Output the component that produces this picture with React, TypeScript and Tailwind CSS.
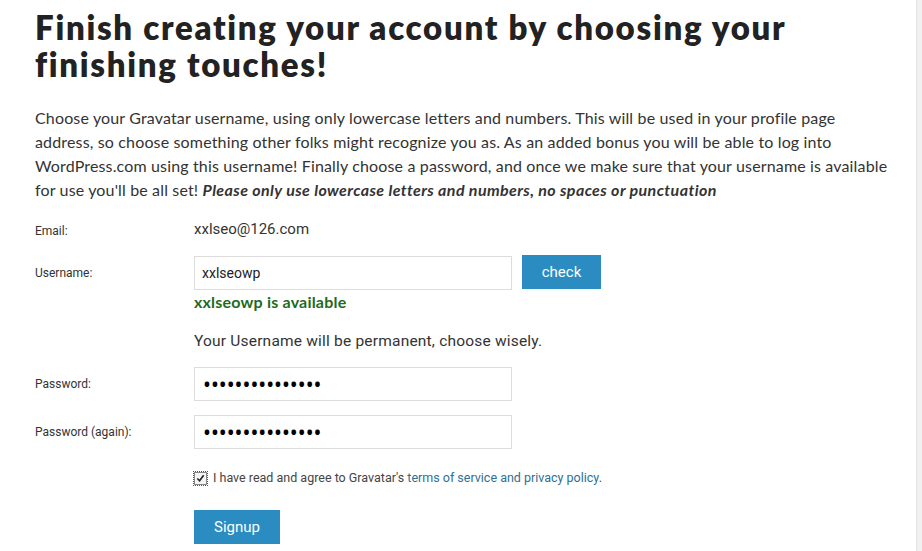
import { useState } from "react";

const sans = "font-['Lato','Open_Sans',sans-serif]";
const narrow = "font-['Roboto','Liberation_Sans',sans-serif]";

function Row({ label, children, className = "" }: { label: string; children: React.ReactNode; className?: string }) {
  return (
    <div className={`flex items-center ${className}`}>
      <div className={`w-[159px] shrink-0 text-[12px] text-[#333] ${narrow}`}>{label}</div>
      <div className="flex items-center gap-[10px]">{children}</div>
    </div>
  );
}

export default function App() {
  const [username, setUsername] = useState("xxlseowp");
  const [agree, setAgree] = useState(true);

  return (
    <div className="flex min-h-screen bg-[#f1f1f1]">
      <main className="flex-1 bg-white pl-[35px] pr-[20px] pt-[9px]">
        <h1 className={`whitespace-nowrap text-[33px] leading-[37px] font-extrabold tracking-[1.7px] text-[#222] ${sans}`}>
          Finish creating your account by choosing your
          <br />
          finishing touches!
        </h1>

        <p className={`mt-[23px] whitespace-nowrap text-[16px] leading-[24px] tracking-[0.15px] text-[#333] ${sans}`}>
          Choose your Gravatar username, using only lowercase letters and numbers. This will be used in your profile page
          <br />
          address, so choose something other folks might recognize you as. As an added bonus you will be able to log into
          <br />
          WordPress.com using this username! Finally choose a password, and once we make sure that your username is available
          <br />
          for use you'll be all set! <em className="font-bold tracking-[0.4px]">Please only use lowercase letters and numbers, no spaces or punctuation</em>
        </p>

        <Row label="Email:" className="mt-[19px] h-[20px]">
          <span className={`-mt-[4px] text-[15px] text-[#333] ${narrow}`}>xxlseo@126.com</span>
        </Row>

        <Row label="Username:" className="mt-[15px]">
          <input
            value={username}
            onChange={(e) => setUsername(e.target.value)}
            className={`h-[34px] w-[318px] border border-[#dcdcdc] bg-white px-[7px] text-[14px] text-[#222] outline-none ${narrow}`}
          />
          <button className={`-mt-[2px] h-[34px] w-[79px] bg-[#2a8cc1] text-[15px] text-white ${narrow}`}>check</button>
        </Row>

        <div className="pl-[159px]">
          <div className={`mt-[2px] text-[16px] leading-[20px] font-bold tracking-[0.2px] text-[#1d6b1d] ${sans}`}>
            {username} is available
          </div>
          <div className={`mt-[19px] text-[15.5px] leading-[20px] tracking-[0.2px] text-[#333] ${narrow}`}>
            Your Username will be permanent, choose wisely.
          </div>
        </div>

        <Row label="Password:" className="mt-[16px]">
          <input
            type="password"
            readOnly
            value="aaaaaaaaaaaaaaa"
            className="h-[34px] w-[318px] border border-[#dcdcdc] bg-white px-[8px] text-[21px] text-black outline-none"
          />
        </Row>

        <Row label="Password (again):" className="mt-[14px]">
          <input
            type="password"
            readOnly
            value="aaaaaaaaaaaaaaa"
            className="h-[34px] w-[318px] border border-[#dcdcdc] bg-white px-[8px] text-[21px] text-black outline-none"
          />
        </Row>

        <div className="mt-[20px] flex items-center pl-[159px]">
          <button
            onClick={() => setAgree(!agree)}
            className="flex h-[13px] w-[13px] items-center justify-center border border-[#888] bg-[#f4f4f4] outline-dotted outline-1 outline-[#555]"
          >
            {agree && (
              <svg viewBox="0 0 10 10" className="h-[9px] w-[9px]">
                <path d="M1.5 5 L4 7.5 L8.5 1.5" fill="none" stroke="#222" strokeWidth="1.8" />
              </svg>
            )}
          </button>
          <span className={`ml-[6px] text-[12.5px] text-[#444] ${narrow}`}>
            I have read and agree to Gravatar's{" "}
            <a href="#" className="text-[#2d7095]">terms of service and privacy policy</a>.
          </span>
        </div>

        <div className="mt-[22px] pl-[159px] pb-[8px]">
          <button className={`h-[34px] w-[86px] bg-[#2a8cc1] text-[15px] text-white ${narrow}`}>Signup</button>
        </div>
      </main>
      <aside className="w-[6px] border-l border-[#e4e4e4] bg-[#f1f1f1]" />
    </div>
  );
}
